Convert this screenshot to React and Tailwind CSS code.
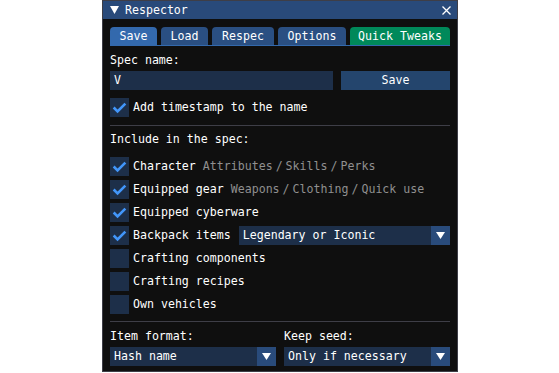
import React from "react";

const FONT = { fontFamily: '"DejaVu Sans Mono", "Liberation Mono", monospace' };

function Check({ on }) {
  return (
    <div className="w-[19px] h-[19px] bg-[#1d2f49] shrink-0">
      {on && (
        <svg width="19" height="19" viewBox="0 0 19 19">
          <polyline points="3.65,9.5 7.55,13.4 15.35,5.6" fill="none" stroke="#4296fa" strokeWidth="2.6" />
        </svg>
      )}
    </div>
  );
}

function Arrow() {
  return (
    <svg width="9" height="7" viewBox="0 0 9 7">
      <polygon points="0,0 9,0 4.5,7" fill="#ffffff" />
    </svg>
  );
}

function Combo({ text, className }) {
  return (
    <div className={"h-[19px] bg-[#1d2f49] flex items-center " + className}>
      <div className="flex-1 pl-[4px] text-white leading-[13px]">{text}</div>
      <div className="w-[19px] h-[19px] bg-[#294b7b] flex items-center justify-center">
        <Arrow />
      </div>
    </div>
  );
}

function Slash() {
  return <span className="inline-block mx-[3px]">/</span>;
}

function Row({ on, children }) {
  return (
    <div className="flex items-center h-[19px] gap-[4px]">
      <Check on={on} />
      <div className="leading-[13px] whitespace-pre">{children}</div>
    </div>
  );
}

export default function App() {
  return (
    <div className="w-[559px] h-[373px] bg-white pl-[102px] overflow-hidden text-[11.6px] text-white" style={FONT}>
      <div className="w-[356px] h-[372px] border border-[#3e3e47] bg-[#0f0f0f] flex flex-col">
        <div className="h-[18px] bg-[#294a7a] flex items-center pl-[7px] pr-[6px]">
          <svg width="9" height="8" viewBox="0 0 9 8" className="mr-[6px]">
            <polygon points="0,0 9,0 4.5,8" fill="#ffffff" />
          </svg>
          <span className="leading-[13px] flex-1">Respector</span>
          <svg width="9" height="9" viewBox="0 0 9 9">
            <path d="M0.5 0.5 L8.5 8.5 M8.5 0.5 L0.5 8.5" stroke="#ffffff" strokeWidth="1.3" />
          </svg>
        </div>
        <div className="px-[7px] pt-[8px] flex flex-col">
          <div className="flex gap-[4px] h-[18px]">
            <div className="w-[47px] bg-[#3369ad] rounded-t-[4px] flex items-center justify-center leading-[13px]">Save</div>
            <div className="w-[47px] bg-[#2a4f82] rounded-t-[4px] flex items-center justify-center leading-[13px]">Load</div>
            <div className="w-[62px] bg-[#2a4f82] rounded-t-[4px] flex items-center justify-center leading-[13px]">Respec</div>
            <div className="w-[68px] bg-[#2a4f82] rounded-t-[4px] flex items-center justify-center leading-[13px]">Options</div>
            <div className="w-[100px] bg-[#00895a] rounded-t-[4px] flex items-center justify-center leading-[13px]">Quick Tweaks</div>
          </div>
          <div className="h-[1px] bg-[#3369ad]" />
          <div className="mt-[8px] leading-[13px] h-[13px]">Spec name:</div>
          <div className="mt-[4px] flex gap-[8px] h-[19px]">
            <div className="w-[223px] bg-[#1d2f49] flex items-center pl-[4px] leading-[13px]">V</div>
            <div className="flex-1 bg-[#24456d] flex items-center justify-center leading-[13px]">Save</div>
          </div>
          <div className="mt-[8px]">
            <Row on>Add timestamp to the name</Row>
          </div>
          <div className="mt-[8px] h-[1px] bg-[#3e3e47]" />
          <div className="mt-[7px] leading-[13px] h-[13px]">Include in the spec:</div>
          <div className="mt-[11px] flex flex-col gap-[4px]">
            <Row on>
              Character <span className="text-[#909090]">Attributes<Slash />Skills<Slash />Perks</span>
            </Row>
            <Row on>
              Equipped gear <span className="text-[#909090]">Weapons<Slash />Clothing<Slash />Quick use</span>
            </Row>
            <Row on>Equipped cyberware</Row>
            <div className="flex items-center h-[19px]">
              <Check on />
              <div className="ml-[4px] leading-[13px] whitespace-pre">Backpack items</div>
              <Combo text="Legendary or Iconic" className="ml-[8px] flex-1" />
            </div>
            <Row>Crafting components</Row>
            <Row>Crafting recipes</Row>
            <Row>Own vehicles</Row>
          </div>
          <div className="mt-[7px] h-[1px] bg-[#3e3e47]" />
          <div className="mt-[8px] flex gap-[8px]">
            <div className="flex-1 flex flex-col gap-[4px]">
              <div className="leading-[13px] h-[13px]">Item format:</div>
              <Combo text="Hash name" className="" />
            </div>
            <div className="flex-1 flex flex-col gap-[4px]">
              <div className="leading-[13px] h-[13px]">Keep seed:</div>
              <Combo text="Only if necessary" className="" />
            </div>
          </div>
        </div>
      </div>
    </div>
  );
}
